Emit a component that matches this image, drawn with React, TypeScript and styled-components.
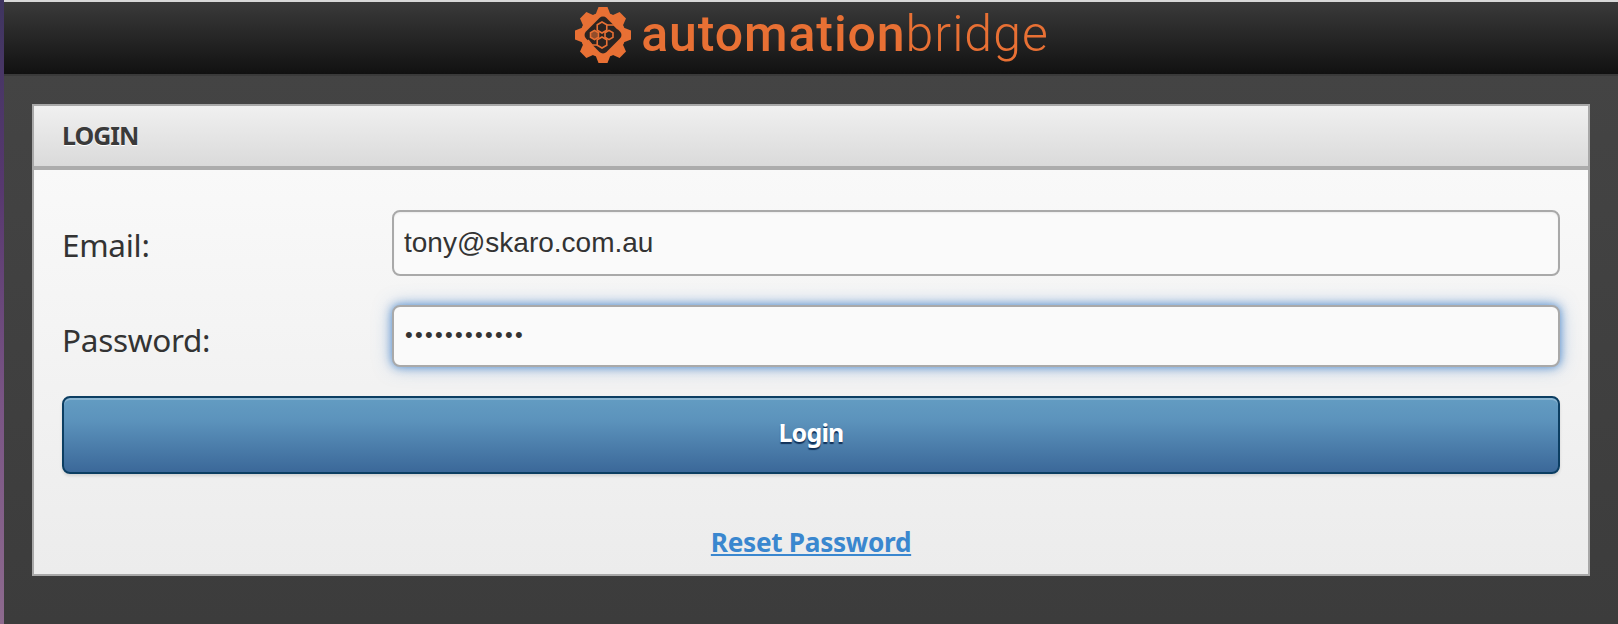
import React from "react";
import styled, { createGlobalStyle } from "styled-components";

const Global = createGlobalStyle`
  html, body { margin: 0; padding: 0; background: #3c3c3c; }
  body { width: 1618px; height: 624px; overflow: hidden; font-family: "Noto Sans", "Liberation Sans", sans-serif; }
`;

const Page = styled.div`
  display: flex;
  width: 1618px;
  height: 624px;
`;

const DesktopEdge = styled.div`
  width: 4px;
  flex: none;
  background: linear-gradient(180deg, #3f3560 0%, #57386f 30%, #7a5585 65%, #8d6a8e 100%);
`;

const Main = styled.div`
  flex: 1;
  display: flex;
  flex-direction: column;
  background: linear-gradient(180deg, #454545 0%, #3c3c3c 100%);
  border-top: 2px solid #d8d8d8;
`;

const TopBar = styled.header`
  height: 72px;
  flex: none;
  display: flex;
  align-items: center;
  justify-content: center;
  gap: 8px;
  box-sizing: border-box;
  padding: 0 0 7px 0;
  background: linear-gradient(180deg, #3a3a3a 0%, #111111 100%);
  box-shadow: 0 2px 0 #3a3a3a;
`;

const Wordmark = styled.div`
  font-family: Roboto, "Open Sans", sans-serif;
  font-size: 50px;
  line-height: 60px;
  padding-bottom: 2px;
  color: #e87034;
  white-space: nowrap;
`;

const WordBold = styled.span`
  font-weight: 500;
  letter-spacing: 0.9px;
`;

const WordLight = styled.span`
  font-weight: 300;
  letter-spacing: 1px;
`;

const Content = styled.main`
  flex: 1;
  padding: 30px 28px 0 28px;
`;

const Panel = styled.section`
  height: 472px;
  box-sizing: border-box;
  border: 2px solid #a8a8a8;
  display: flex;
  flex-direction: column;
  background: linear-gradient(180deg, #fbfbfb 0%, #ececec 100%);
`;

const PanelHead = styled.div`
  height: 64px;
  flex: none;
  box-sizing: border-box;
  border-bottom: 4px solid #acacac;
  background: linear-gradient(180deg, #f0f0f0 0%, #dadada 100%);
  display: flex;
  align-items: center;
  padding: 0 0 2px 28px;
`;

const PanelTitle = styled.h2`
  margin: 0;
  font-size: 25px;
  font-weight: 700;
  color: #3a3a3a;
  text-shadow: 0 1px 0 #fff;
  letter-spacing: -1px;
`;

const Form = styled.form`
  flex: 1;
  display: flex;
  flex-direction: column;
  padding: 40px 28px 0 28px;
`;

const Row = styled.div`
  display: grid;
  grid-template-columns: 330px 1fr;
  align-items: center;
  margin-bottom: 29px;
`;

const Label = styled.label<{ $drop: number }>`
  font-size: 31.5px;
  font-weight: 400;
  line-height: 40px;
  padding-top: ${(p) => p.$drop}px;
  color: #333;
  letter-spacing: -0.3px;
`;

const Input = styled.input<{ $height: number }>`
  width: 100%;
  height: ${(p) => p.$height}px;
  box-sizing: border-box;
  border: 2px solid #a9a9a9;
  border-radius: 8px;
  padding: 0 10px;
  background: #fafafa;
  color: #333;
  font-family: "Liberation Sans", Arial, sans-serif;
  font-size: 28px;
  outline: none;
  box-shadow: inset 0 1px 2px rgba(0, 0, 0, 0.06);
`;

const PasswordInput = styled(Input)`
  font-size: 22px;
  letter-spacing: 2.3px;
  padding: 0 10px 3px 11px;
  box-shadow: 0 0 9px rgba(82, 140, 205, 0.9), 0 0 18px rgba(82, 140, 205, 0.5);
`;

const LoginButton = styled.button`
  height: 78px;
  flex: none;
  box-sizing: border-box;
  border: 2px solid #0c3e62;
  border-radius: 8px;
  padding: 0 0 6px 0;
  background: linear-gradient(180deg, #639cc2 0%, #5c93bc 30%, #3b6899 100%);
  box-shadow: inset 0 2px 0 rgba(255, 255, 255, 0.25), 0 2px 3px rgba(0, 0, 0, 0.12);
  color: #fff;
  font-family: "Noto Sans", sans-serif;
  font-size: 25px;
  font-weight: 700;
  letter-spacing: -0.8px;
  text-shadow: 0 2px 1px rgba(10, 40, 80, 0.9);
`;

const ResetRow = styled.div`
  display: flex;
  justify-content: center;
  margin-top: 50px;
`;

const ResetLink = styled.a`
  font-size: 26.2px;
  font-weight: 700;
  color: #3a87cf;
  text-decoration: underline;
  letter-spacing: -0.3px;
  line-height: 36px;
`;

const hex = (cx: number, cy: number, r: number) => {
  const h = r * 0.866;
  return `M${cx} ${cy - r} L${cx + h} ${cy - r / 2} V${cy + r / 2} L${cx} ${cy + r} L${cx - h} ${cy + r / 2} V${cy - r / 2} Z`;
};

function GearLogo() {
  const teeth = Array.from({ length: 8 }, (_, i) => i * 45);
  return (
    <svg width="60" height="60" viewBox="0 0 60 60" aria-hidden="true">
      <g fill="#e87034">
        {teeth.map((a) => (
          <path key={a} d="M25.5 2 L34.5 2 L38 11 L22 11 Z" transform={`rotate(${a} 30 30)`} />
        ))}
        <circle cx="30" cy="30" r="22.5" />
      </g>
      <rect x="15.5" y="15.5" width="29" height="29" rx="5" fill="#2b2421" transform="rotate(45 30 30)" />
      <g fill="none" stroke="#e87034" strokeWidth="1.6">
        <path d={hex(29, 22.5, 5.5)} />
        <path d={hex(29, 37.5, 5.5)} />
        <path d={hex(36, 30, 4.6)} />
        <path d={hex(21.5, 30, 4.6)} fill="#e87034" fillOpacity="0.55" />
        <path d="M34 20 H41 L45 24" />
        <path d="M24 40 H19 L15 35" />
      </g>
    </svg>
  );
}

export default function App() {
  return (
    <Page>
      <Global />
      <DesktopEdge />
      <Main>
        <TopBar>
          <GearLogo />
          <Wordmark>
            <WordBold>automation</WordBold>
            <WordLight>bridge</WordLight>
          </Wordmark>
        </TopBar>
        <Content>
          <Panel>
            <PanelHead>
              <PanelTitle>LOGIN</PanelTitle>
            </PanelHead>
            <Form onSubmit={(e) => e.preventDefault()}>
              <Row>
                <Label htmlFor="email" $drop={4}>Email:</Label>
                <Input id="email" type="text" $height={66} defaultValue="tony@skaro.com.au" />
              </Row>
              <Row>
                <Label htmlFor="password" $drop={8}>Password:</Label>
                <PasswordInput id="password" type="password" $height={62} defaultValue="............" />
              </Row>
              <LoginButton type="submit">Login</LoginButton>
              <ResetRow>
                <ResetLink href="#">Reset Password</ResetLink>
              </ResetRow>
            </Form>
          </Panel>
        </Content>
      </Main>
    </Page>
  );
}
